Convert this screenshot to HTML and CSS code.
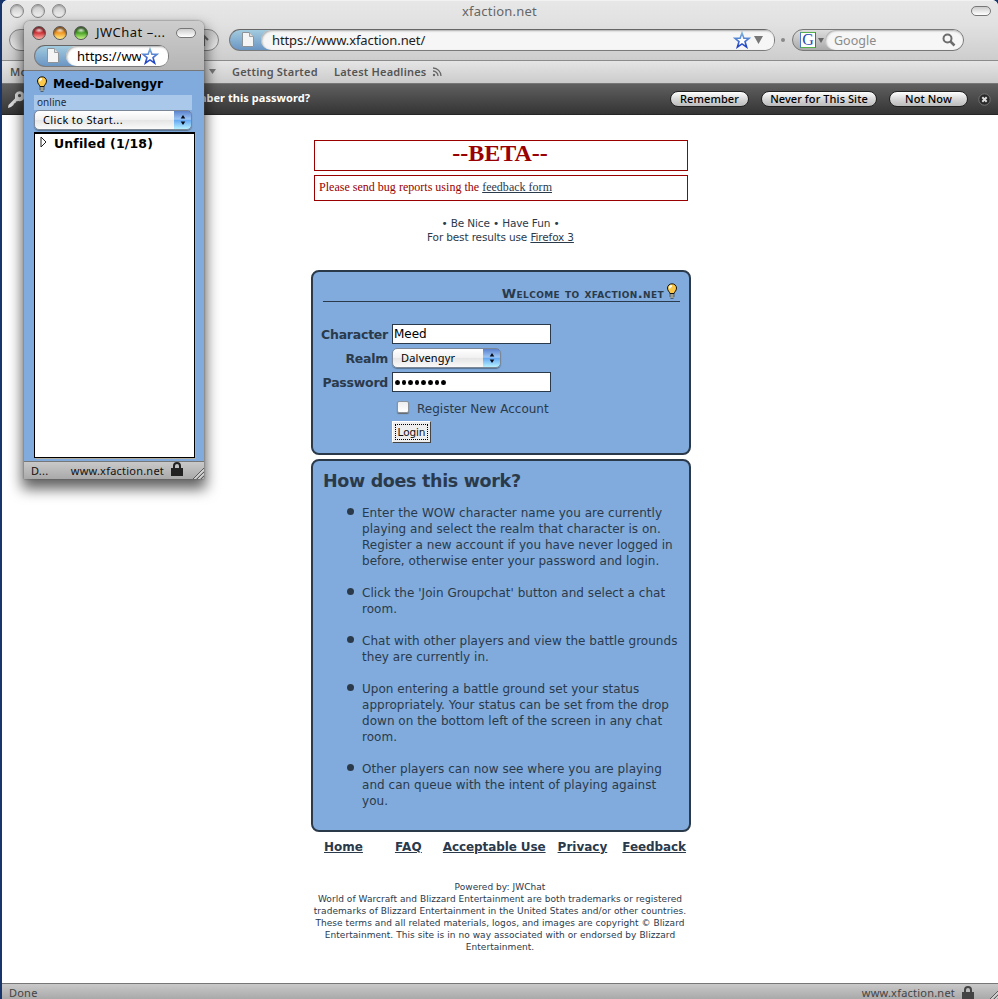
FILE: index.html
```html
<!DOCTYPE html>
<html lang="en">
<head>
<meta charset="utf-8">
<title>xfaction.net</title>
<link rel="stylesheet" href="styles.css">
</head>
<body>
<svg class="defs" width="0" height="0">
  <defs>
    <linearGradient id="starfill" x1="0" y1="0" x2="0" y2="1"><stop offset="0" stop-color="#7db4de"/><stop offset="1" stop-color="#1e3fc4"/></linearGradient>
    <symbol id="star" viewBox="0 0 18 18"><path d="M9 2l1.900 5.200h5.300l-4.200 3.400 1.600 5.400L9 12.900 4.400 16 6 10.600 1.800 7.200h5.300z" fill="#fff" stroke="url(#starfill)" stroke-width="1.600"/></symbol>
    <symbol id="page" viewBox="0 0 12 15"><path d="M.5.5h7l4 4v10H.5z" fill="#f4f4f4" stroke="#8c9498"/><path d="M7.500.5v4h4" fill="#ddd" stroke="#9aa0a4"/></symbol>
    <symbol id="bulb" viewBox="0 0 12 16"><path d="M4 10.500C3.500 8.500 1.500 8 1.500 5a4.500 4.200 0 0 1 9 0c0 3-2 3.500-2.500 5.500z" fill="#fbc84a" stroke="#15110a" stroke-width="1"/><path d="M3.800 5.500A2 2 0 0 1 6 3" stroke="#fff" stroke-width="1.800" fill="none"/><path d="M3.500 10.500h5v1h-5zM3.500 12.500h5v1h-5zM4.500 14.500h3v1h-3z" fill="#151515"/><path d="M4.500 12h3M4.500 14h3" stroke="#f1dfa0"/></symbol>
    <symbol id="lock" viewBox="0 0 12 14"><path d="M3 7V4a3 3 0 0 1 6 0v3" fill="none" stroke="currentColor" stroke-width="2"/><path d="M0 6h12v8H0z" fill="currentColor"/></symbol>
    <symbol id="grip" viewBox="0 0 12 12"><path d="M1 12L12 1M5 12l7-7M9 12l3-3" stroke="#5c5c5c" stroke-width="1"/><path d="M2.500 12L12 2.500M6.500 12L12 6.500" stroke="#eee"/></symbol>
    <symbol id="updown" viewBox="0 0 8 12"><path d="M4 1l2.300 3.500H1.700zM4 11l2.300-3.500H1.700z" fill="#060a18"/></symbol>
  </defs>
</svg>
<div class="browser">
  <header class="chrome">
    <div class="titlebar">
      <div class="lights"><i></i><i></i><i></i></div>
      <div class="title">xfaction.net</div>
      <i class="pill"></i>
    </div>
    <div class="toolbar">
      <div class="navbtns"><svg width="10" height="12" viewBox="0 0 10 12"><path d="M5 12V3M1 6l4-4 4 4" fill="none" stroke="#666" stroke-width="2"/></svg></div>
      <div class="address">
        <div class="ident"><svg width="12" height="15"><use href="#page"/></svg></div>
        <div class="url"><span>https://www.xfaction.net/</span><svg class="urlstar" width="18" height="18"><use href="#star"/></svg><svg width="9" height="8" viewBox="0 0 9 8"><path d="M0 0h9L4.500 8z" fill="#777"/></svg></div>
      </div>
      <i class="dot"></i>
      <div class="search">
        <div class="engine"><b>G</b><svg width="6" height="5" viewBox="0 0 6 5"><path d="M0 0h6L3 5z" fill="#666"/></svg></div>
        <div class="query"><span>Google</span><svg width="14" height="14" viewBox="0 0 14 14"><circle cx="5.500" cy="5.500" r="4" fill="none" stroke="#6d6d6d" stroke-width="2"/><path d="M8.500 8.500l4 4" stroke="#6d6d6d" stroke-width="2.500"/></svg></div>
      </div>
    </div>
  </header>
  <nav class="bookmarks">
    <span class="most">Most Visited</span><svg class="drop" width="7" height="5" viewBox="0 0 7 5"><path d="M0 0h7L3.500 5z" fill="#777"/></svg>
    <span class="started">Getting Started</span>
    <span class="headlines">Latest Headlines</span>
    <svg width="10" height="10" viewBox="0 0 10 10"><circle cx="2" cy="8" r="1.200" fill="#666"/><path d="M1 4a5 5 0 0 1 5 5M1 1a8 8 0 0 1 8 8" fill="none" stroke="#666" stroke-width="1.300"/></svg>
  </nav>
  <div class="notice">
    <svg class="key" width="17" height="17" viewBox="0 0 17 17"><path fill-rule="evenodd" d="M7 3.500A5 5 0 1 1 10.500 10L8 10.500 7.500 12 6 12.500 5.500 14 3 16 0 17l.5-3L7 7.500zM11.500 3a1.600 1.600 0 1 0 .1 0z" fill="#ddd"/></svg>
    <span class="ask">Remember this password?</span>
    <button class="nbtn remember">Remember</button><button class="nbtn never">Never for This Site</button><button class="nbtn notnow">Not Now</button>
    <svg class="close" width="13" height="13" viewBox="0 0 13 13"><circle cx="6.500" cy="6.500" r="5.700" fill="#282828" stroke="#777"/><path d="M4.300 4.300l4.400 4.400m0-4.400L4.300 8.700" stroke="#ddd" stroke-width="2"/></svg>
  </div>
  <main class="page">
    <h1 class="beta">--BETA--</h1>
    <p class="bugs"><span>Please send bug reports using the <a>feedback form</a></span></p>
    <p class="rules"><span class="l1">• Be Nice • Have Fun •</span><br><span class="l2">For best results use <a>Firefox 3</a></span></p>
    <section class="panel login">
      <h2 class="welcome"><span>Welcome to xfaction.net</span><svg width="12" height="16"><use href="#bulb"/></svg></h2>
      <form class="fields">
        <label>Character</label><div class="input">Meed</div>
        <label>Realm</label><div class="select realm"><span>Dalvengyr</span><i><svg width="8" height="12"><use href="#updown"/></svg></i></div>
        <label>Password</label><div class="input pw"><i></i><i></i><i></i><i></i><i></i><i></i><i></i><i></i></div>
        <div class="register"><i></i><span>Register New Account</span></div>
        <div class="submit"><span>Login</span></div>
      </form>
    </section>
    <section class="panel how">
      <h2>How does this work?</h2>
      <ul>
        <li>Enter the WOW character name you are currently<br>playing and select the realm that character is on.<br>Register a new account if you have never logged in<br>before, otherwise enter your password and login.</li>
        <li>Click the 'Join Groupchat' button and select a chat<br>room.</li>
        <li>Chat with other players and view the battle grounds<br>they are currently in.</li>
        <li>Upon entering a battle ground set your status<br>appropriately. Your status can be set from the drop<br>down on the bottom left of the screen in any chat<br>room.</li>
        <li>Other players can now see where you are playing<br>and can queue with the intent of playing against<br>you.</li>
      </ul>
    </section>
    <div class="links"><a>Home</a><a>FAQ</a><a>Acceptable Use</a><a>Privacy</a><a>Feedback</a></div>
    <footer class="legal">Powered by: JWChat<br>World of Warcraft and Blizzard Entertainment are both trademarks or registered<br>trademarks of Blizzard Entertainment in the United States and/or other countries.<br>These terms and all related materials, logos, and images are copyright © Blizard<br>Entertainment. This site is in no way associated with or endorsed by Blizzard<br>Entertainment.</footer>
  </main>
  <div class="status"><span>Done</span><span class="host">www.xfaction.net</span><svg class="lock" width="12" height="14"><use href="#lock"/></svg><svg class="grip" width="12" height="12"><use href="#grip"/></svg></div>
</div>

<div class="popup">
  <div class="ptitle"><div class="lights color"><i></i><i></i><i></i></div><span>JWChat –...</span><i class="pill"></i></div>
  <div class="ptool"><div class="address">
    <div class="ident"><svg width="12" height="15"><use href="#page"/></svg></div>
    <div class="url"><span>https://ww</span><svg class="urlstar" width="18" height="18"><use href="#star"/></svg></div>
  </div></div>
  <div class="pbody">
    <div class="user"><svg width="12" height="16"><use href="#bulb"/></svg><span>Meed-Dalvengyr</span></div>
    <div class="online">online</div>
    <div class="select start"><span>Click to Start...</span><i><svg width="8" height="12"><use href="#updown"/></svg></i></div>
    <div class="roster"><svg width="8" height="12" viewBox="0 0 8 12"><path d="M1 1v10l5-5z" fill="#fff" stroke="#222"/></svg><span>Unfiled (1/18)</span></div>
  </div>
  <div class="pstatus"><span>D...</span><span class="host">www.xfaction.net</span><svg class="lock" width="12" height="14"><use href="#lock"/></svg><svg class="grip" width="12" height="12"><use href="#grip"/></svg></div>
</div>
</body>
</html>
```
FILE: styles.css
```css
* { box-sizing: border-box; }
body { margin: 0; width: 998px; height: 999px; overflow: hidden; background: #17346b; font-family: "Noto Sans", sans-serif; color: #2b3a4b; position: relative; }
.defs { position: absolute; }
svg { display: block; flex: none; }
span, a, label, h1, h2, li, button { white-space: nowrap; }
i { flex: none; }
a { text-decoration: underline; text-underline-offset: 1px; text-decoration-thickness: 1px; }

.browser { height: 999px; margin-left: 2px; display: flex; flex-direction: column; background: #fff; border-radius: 6px 6px 0 0; overflow: hidden; }
.chrome { height: 61px; background: linear-gradient(#e7e7e7, #e1e1e1 40%, #cdcdcd); border-top: 1px solid #f2f2f2; border-bottom: 1px solid #8b8b8b; }
.titlebar { height: 19px; display: flex; align-items: center; padding: 0 7px 0 8px; }
.lights { display: flex; gap: 7px; }
.lights i { width: 14px; height: 14px; border-radius: 50%; border: 1px solid #858585; background: linear-gradient(#c9c9c9, #dcdcdc 50%, #f5f5f5); box-shadow: inset 0 1px 2px #999; }
.title { flex: 1; text-align: center; font-size: 13px; line-height: 18px; letter-spacing: .22px; color: #666; padding-right: 28px; margin-left: -10px; }
.pill { width: 20px; height: 10px; border: 1.500px solid #777; border-radius: 5px; background: linear-gradient(#ccc, #fff); }
.titlebar .pill { margin-bottom: -1px; }
.toolbar { display: flex; align-items: center; padding: 9px 0 0 7px; }
.navbtns { width: 210px; height: 22px; display: flex; justify-content: flex-end; align-items: center; padding-right: 9px; border: 1px solid #858585; border-radius: 11px; background: linear-gradient(#c6c6c6, #efefef); }
.address { display: flex; height: 22px; border: 1px solid #7a7a7a; border-top-color: #666; border-radius: 11px; background: linear-gradient(#a3cbdf, #6a95c3); }
.toolbar .address { width: 546px; margin-left: 10px; }
.ident { width: 31px; padding: 2px 0 0 12px; }
.url { flex: 1; display: flex; align-items: center; background: #f6f6f6; border-radius: 12px 10px 10px 12px; box-shadow: inset 1px 1px 2px #aaa; padding-left: 11px; font-size: 13px; color: #222; }
.url span { flex: 1; letter-spacing: -.1px; }
.toolbar .url svg:last-child { margin: 0 11px 0 3px; }
.dot { width: 4px; height: 4px; border-radius: 50%; background: #888; margin: 0 7px 0 6px; }
.search { width: 172px; height: 22px; border: 1px solid #777; border-radius: 11px; display: flex; background: linear-gradient(#ddd, #aaa); }
.engine { width: 32px; display: flex; align-items: center; gap: 2px; padding-left: 7px; }
.engine b { width: 16px; height: 16px; background: #fff; border: 1px solid #4d76cb; border-top-color: #55b04b; border-right-color: #c8373c; border-bottom-color: #55b04b; font: 16px/14px "Liberation Serif", serif; color: #254bb5; text-align: center; flex: none; }
.query { flex: 1; display: flex; align-items: center; justify-content: space-between; padding: 0 7px 0 9px; background: #f6f6f6; border-radius: 11px; box-shadow: inset 1px 1px 2px #aaa; font-size: 12.500px; color: #8b8b8b; }

.bookmarks { height: 22px; display: flex; align-items: center; padding-left: 8px; background: linear-gradient(#e5e5e5, #cbcbcb); font-size: 11px; line-height: 20px; padding-bottom: 1px; font-weight: 600; letter-spacing: .2px; color: #555; }
.most { width: 198px; text-align: left; }
.most + .drop { margin-left: 1px; }
.started { margin-left: 16px; width: 102px; }
.headlines { width: 98px; }
.notice { height: 32px; display: flex; align-items: center; padding-left: 6px; background: linear-gradient(#606060, #343434); border-top: 1px solid #777; border-bottom: 1px solid #262626; }
.ask { width: 302px; margin-left: 1px; text-align: right; color: #fff; font-size: 11px; line-height: 20px; font-weight: 700; letter-spacing: .05px; margin-right: 360px; padding-bottom: 2px; }
.key { margin-right: -18px; }
.nbtn { flex: none; height: 16px; padding: 0; border: 1px solid #222; border-radius: 8px; background: linear-gradient(#fff, #d8d8d8 50%, #bbb); font: 500 11px/14px "Noto Sans", sans-serif; letter-spacing: .08px; color: #000; }
.remember { width: 79px; }
.never { width: 116px; margin-left: 12px; }
.notnow { width: 79px; margin-left: 12px; }
.close { margin-left: 10px; }

.page { flex: 1; width: 380px; margin-left: 309px; padding-top: 25px; font-family: "DejaVu Sans", sans-serif; min-height: 0; }
.beta { margin: 0 3px; height: 31px; border: 1px solid #900; color: #900; font: 700 24px/25px "Liberation Serif", serif; text-align: center; padding-right: 2px; }
.bugs { margin: 4px 3px 0; height: 26px; border: 1px solid #900; color: #900; padding-left: 4px; font: 12px/23px "Liberation Serif", serif; letter-spacing: .015px; }
.bugs a { color: #2b3a4b; }
.rules { margin: 15px 1px 0 0; text-align: center; font-size: 10.500px; line-height: 14px; letter-spacing: -.14px; height: 54px; }
.panel { background: #80abdc; border: 2px solid #2b3a4b; border-radius: 8px; }
.login { height: 185px; padding: 0 9px 0 10px; }
.welcome { margin: 0; height: 30px; border-bottom: 1px solid #2b3a4b; display: flex; justify-content: flex-end; align-items: flex-end; gap: 2px; padding-right: 2px; font-size: 13px; font-variant: small-caps; line-height: 14px; letter-spacing: .38px; }
.welcome svg { margin-bottom: 2px; }
.fields { margin: 22px 0 0 -1px; display: grid; grid-template-columns: 66px 1fr; column-gap: 4px; grid-template-rows: 20px 20px 20px 20px 22px; row-gap: 4px; align-items: center; }
.fields label { font-size: 12.500px; font-weight: 700; justify-self: end; letter-spacing: -.25px; }
.input { width: 159px; height: 20px; border: 1px solid #2b3a4b; background: #fff; font-size: 12px; line-height: 19px; padding-left: 1px; color: #000; }
.pw { display: flex; align-items: center; gap: 2px; padding-left: 2px; }
.pw i { width: 4.600px; height: 5px; border-radius: 50%; background: #000; }
.select { height: 20px; display: flex; border: 1px solid #7b8797; border-radius: 5px; background: linear-gradient(#fff, #f0f0f0 49%, #e4e4e4 50%, #fafafa); overflow: hidden; font: 11px/18px "Noto Sans", sans-serif; color: #000; box-shadow: 0 1px 1px #56728f; }
.select span { flex: 1; padding-left: 8px; letter-spacing: .2px; }
.select i { width: 18px; margin: -1px -1px -1px 0; border: 1px solid #3c5f9d; border-width: 1px 1px 1px 0; border-top-color: #12248b; border-radius: 0 5px 5px 0; display: flex; align-items: center; justify-content: center; background: linear-gradient(#5c82cd, #9cc5f4 45%, #66a9f2 52%, #b6f0ff); }
.realm { width: 109px; }
.register { grid-column: 2; display: flex; align-items: center; padding: 6px 0 0 5px; font-size: 12px; gap: 8px; }
.register i { width: 12px; height: 12px; background: linear-gradient(#eee, #fff); border: 1px solid #8a929c; border-radius: 2px; margin-top: -4px; box-shadow: 0 1px 1px #666; }
.submit { grid-column: 2; width: 39px; height: 22px; background: #eee; border: 1px solid #fff; border-right-color: #444; border-bottom-color: #444; padding: 2px; margin-top: 1px; font-size: 10.500px; line-height: 15px; color: #111; letter-spacing: -.1px; }
.submit span { display: block; border: 1px dotted #000; text-align: center; height: 16px; }

.how { height: 373px; margin-top: 4px; padding: 10px 9px 0; }
.how h2 { margin: 0 0 0 1px; font-size: 17.500px; line-height: 21px; letter-spacing: -.32px; }
.how ul { margin: 13px 0 0; padding-left: 40px; font-size: 12px; line-height: 16px; letter-spacing: .035px; list-style: none; }
.how li { margin-bottom: 16px; }
.how li::before { content: ""; float: left; width: 7px; height: 7px; border-radius: 50%; margin: 3px 0 0 -15px; background: #2b3a4b; }
.links { display: flex; margin-top: 7px; font-size: 12px; line-height: 16px; font-weight: 700; padding-left: 13px; }
.links a:nth-child(1) { margin-right: 32px; }
.links a:nth-child(2) { margin-right: 21px; letter-spacing: .2px; }
.links a:nth-child(3) { margin-right: 12px; letter-spacing: -.1px; }
.links a:nth-child(4) { margin-right: 15px; }
.links a:nth-child(5) { letter-spacing: -.08px; }
.legal { margin: 26px -9px 0 -11px; text-align: center; font-size: 9px; line-height: 12px; letter-spacing: .05px; white-space: nowrap; }

.status, .pstatus { display: flex; align-items: center; background: linear-gradient(#c9c9c9, #a9a9a9); border-top: 1px solid #777; font-size: 11px; letter-spacing: .22px; color: #444; }
.status { height: 16px; padding-left: 7px; line-height: 13px; align-items: flex-start; padding-top: 2px; overflow: hidden; }
.host { margin-left: auto; }
.status .lock { margin: 0 9px 0 7px; color: #444; }
.status .grip { margin: 3px -1px 0 4px; }

.popup { position: absolute; left: 24px; top: 21px; width: 180px; height: 458px; display: flex; flex-direction: column; background: linear-gradient(#cdcdcd, #b5b5b5 49px); border-radius: 6px 6px 0 0; box-shadow: 0 0 2px #555, 0 8px 14px 2px rgba(0,0,0,.62); }
.ptitle { height: 22px; display: flex; align-items: center; padding: 2px 8px 0 8px; color: #111; font-size: 13px; }
.ptitle span { flex: 1; margin: -2px 0 0 8px; letter-spacing: .5px; }
.color i { border-color: #555; box-shadow: inset 0 2px 2px rgba(0,0,0,.4); }
.color i:nth-child(1) { background: radial-gradient(ellipse 5px 3px at 50% 25%, rgba(255,255,255,.85), transparent), linear-gradient(#b61c22, #d0383d 50%, #ffb5ac); }
.color i:nth-child(2) { background: radial-gradient(ellipse 5px 3px at 50% 25%, rgba(255,255,255,.85), transparent), linear-gradient(#b96815, #f29a26 50%, #ffee8c); }
.color i:nth-child(3) { background: radial-gradient(ellipse 5px 3px at 50% 25%, rgba(255,255,255,.85), transparent), linear-gradient(#387b20, #4ea52a 50%, #c6f987); }
.ptool { height: 27px; padding: 2px 0 0 10px; }
.ptool .address { width: 135px; }
.ptool .url { background: #fff; color: #000; padding: 0 9px 0 11px; }
.ptool .url span { width: 64px; flex: none; overflow: hidden; letter-spacing: -.05px; }
.pbody { height: 391px; border-top: 1px solid #777; background: #80abdc; padding: 4px 9px 0 10px; font-family: "DejaVu Sans", sans-serif; color: #000; }
.user { display: flex; align-items: center; height: 20px; padding: 0 0 2px 2px; gap: 5px; font-size: 12px; font-weight: 700; letter-spacing: -.06px; }
.online { height: 15px; width: 158px; background: #a9c8ea; padding-left: 3px; font: 10px/15px "Noto Sans", sans-serif; letter-spacing: .05px; color: #1e2b40; }
.start { width: 158px; letter-spacing: .1px; }
.start span { letter-spacing: .37px; }
.roster { height: 326px; margin-top: 2px; width: 161px; border: 1px solid #000; border-width: 2px 1px 1px; box-shadow: 1px 1px #b4ae9e; background: #fff; display: flex; padding: 2px 0 0 5px; font-size: 12.500px; line-height: 16px; font-weight: 700; letter-spacing: .15px; }
.roster span { margin-left: 6px; }
.pstatus { height: 18px; padding-left: 7px; color: #111; }
.pstatus .lock { margin: -3px 9px 0 7px; color: #222; }
.pstatus .grip { margin-top: 5px; }
```
